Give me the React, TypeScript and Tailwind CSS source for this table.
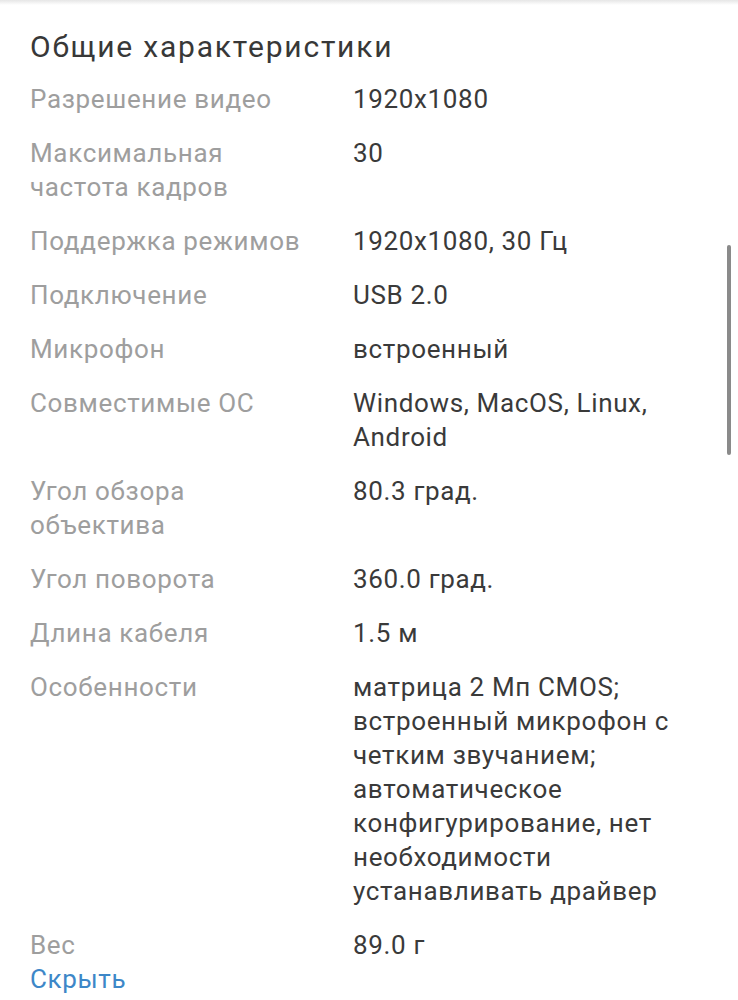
import React from "react";

const rows: [string, string][] = [
  ["Разрешение видео", "1920x1080"],
  ["Максимальная частота кадров", "30"],
  ["Поддержка режимов", "1920x1080, 30 Гц"],
  ["Подключение", "USB 2.0"],
  ["Микрофон", "встроенный"],
  ["Совместимые ОС", "Windows, MacOS, Linux, Android"],
  ["Угол обзора объектива", "80.3 град."],
  ["Угол поворота", "360.0 град."],
  ["Длина кабеля", "1.5 м"],
  [
    "Особенности",
    "матрица 2 Мп CMOS; встроенный микрофон с четким звучанием; автоматическое конфигурирование, нет необходимости устанавливать драйвер",
  ],
  ["Вес", "89.0 г"],
];

export default function App() {
  return (
    <div
      className="relative w-[738px] h-[1000px] bg-white overflow-hidden"
      style={{ fontFamily: "Roboto, 'Noto Sans', sans-serif" }}
    >
      <div className="h-[5px] bg-gradient-to-b from-[#e6e6e6] to-white" />
      <div className="pl-[30px] pr-[30px]">
        <h2 className="text-[30px] tracking-[1.8px] leading-[40px] text-[#383838] mt-[22px] mb-[15px]">
          Общие характеристики
        </h2>
        <div className="flex flex-col gap-[20px]">
          {rows.map(([k, v], i) => (
            <div key={i} className="flex text-[26px] tracking-[0.65px] leading-[34px]">
              <div className="w-[323px] shrink-0 pr-[36px] text-[#9e9e9e]">{k}</div>
              <div className="w-[345px] text-[#3a3a3a]">{v}</div>
            </div>
          ))}
        </div>
        <div className="text-[26px] tracking-[0.65px] leading-[34px] text-[#3d87c8]">Скрыть</div>
      </div>
      <div className="absolute left-[727px] top-[245px] w-[4px] h-[210px] rounded-full bg-[#8a8a8a]" />
    </div>
  );
}
